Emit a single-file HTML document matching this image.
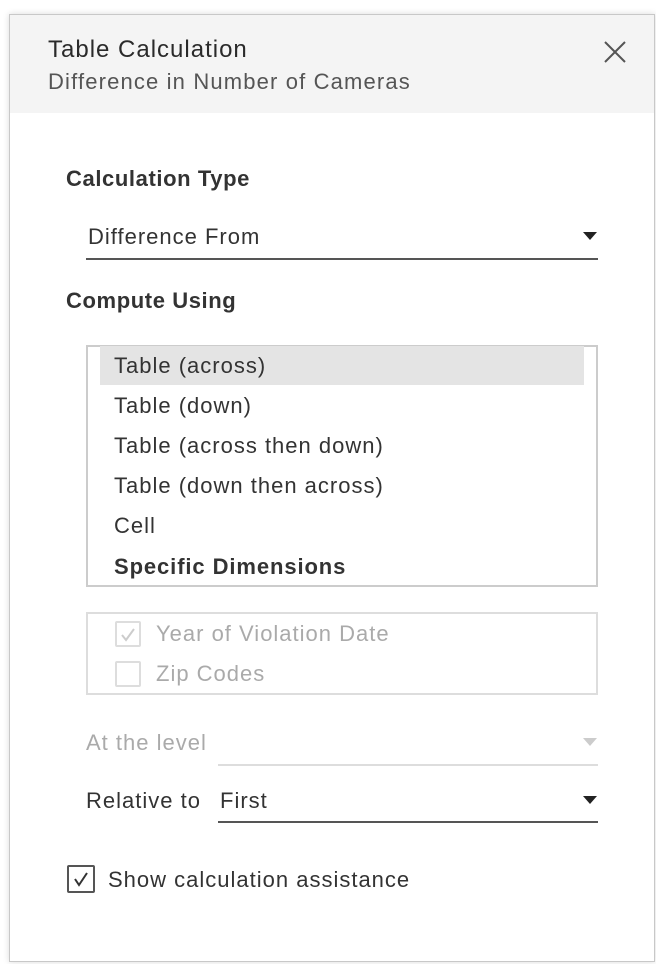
<!DOCTYPE html><html><head><style>
body{margin:0;width:656px;height:964px;background:#fff;font-family:"Liberation Sans",sans-serif;position:relative;overflow:hidden;color:#333;letter-spacing:1px}
.a{position:absolute;white-space:nowrap}
.panel{position:absolute;left:9px;top:14px;width:644px;height:946px;border:1px solid #c8c8c8;box-shadow:0 0 6px rgba(0,0,0,.15);background:#fff}
.hdr{position:absolute;left:10px;top:15px;width:644px;height:98px;background:#f4f4f4}
.line{position:absolute;height:2px;background:#555}
.tri{position:absolute;width:0;height:0;border-left:7px solid transparent;border-right:7px solid transparent;border-top:8px solid #222}
.cb{position:absolute;width:26px;height:26px;box-sizing:border-box;border:2px solid #ccc;border-radius:2px}
</style></head><body>
<div class="panel"></div><div class="hdr"></div>
<div class="a" style="left:48px;top:36px;font-size:24px;color:#2a2a2a">Table Calculation</div>
<div class="a" style="left:48px;top:69px;font-size:22px;color:#555;letter-spacing:1.15px">Difference in Number of Cameras</div>
<svg class="a" style="left:603px;top:40px" width="24" height="24"><path d="M2 2L22 22M22 2L2 22" stroke="#555" stroke-width="2"/></svg>
<div class="a" style="left:66px;top:166px;font-size:22px;font-weight:bold;color:#333;letter-spacing:0.6px">Calculation Type</div>
<div class="a" style="left:88px;top:224px;font-size:22px">Difference From</div>
<div class="tri" style="left:583px;top:232px"></div>
<div class="line" style="left:86px;top:258px;width:512px"></div>
<div class="a" style="left:66px;top:288px;font-size:22px;font-weight:bold;letter-spacing:0.6px">Compute Using</div>
<div class="a" style="left:86px;top:345px;width:512px;height:242px;border:2px solid #ccc;box-sizing:border-box"></div>
<div class="a" style="left:100px;top:346px;width:484px;height:39px;background:#e4e4e4"></div>
<div class="a" style="left:114px;top:353px;font-size:22px">Table (across)</div>
<div class="a" style="left:114px;top:393px;font-size:22px">Table (down)</div>
<div class="a" style="left:114px;top:433px;font-size:22px">Table (across then down)</div>
<div class="a" style="left:114px;top:473px;font-size:22px">Table (down then across)</div>
<div class="a" style="left:114px;top:513px;font-size:22px">Cell</div>
<div class="a" style="left:114px;top:554px;font-size:22px;font-weight:bold;letter-spacing:0.9px">Specific Dimensions</div>
<div class="a" style="left:86px;top:612px;width:512px;height:83px;border:2px solid #ddd;box-sizing:border-box"></div>
<div class="cb" style="left:115px;top:621px;border-color:#ddd"></div>
<svg class="a" style="left:119px;top:626px" width="18" height="18"><path d="M3 9L7 14L15 3" stroke="#ccc" stroke-width="2" fill="none"/></svg>
<div class="a" style="left:156px;top:621px;font-size:22px;color:#aaa">Year of Violation Date</div>
<div class="cb" style="left:115px;top:661px;border-color:#ddd"></div>
<div class="a" style="left:156px;top:661px;font-size:22px;color:#aaa">Zip Codes</div>
<div class="a" style="left:86px;top:730px;font-size:22px;color:#aaa">At the level</div>
<div class="tri" style="left:583px;top:738px;border-top-color:#ccc"></div>
<div class="line" style="left:218px;top:764px;width:380px;background:#ddd"></div>
<div class="a" style="left:86px;top:788px;font-size:22px">Relative to</div>
<div class="a" style="left:220px;top:788px;font-size:22px">First</div>
<div class="tri" style="left:583px;top:796px"></div>
<div class="line" style="left:218px;top:821px;width:380px"></div>
<div class="cb" style="left:67px;top:865px;width:28px;height:28px;border-color:#555"></div>
<svg class="a" style="left:72px;top:870px" width="18" height="18"><path d="M3 9L7 15L15 3" stroke="#333" stroke-width="2" fill="none"/></svg>
<div class="a" style="left:108px;top:867px;font-size:22px">Show calculation assistance</div>
</body></html>
